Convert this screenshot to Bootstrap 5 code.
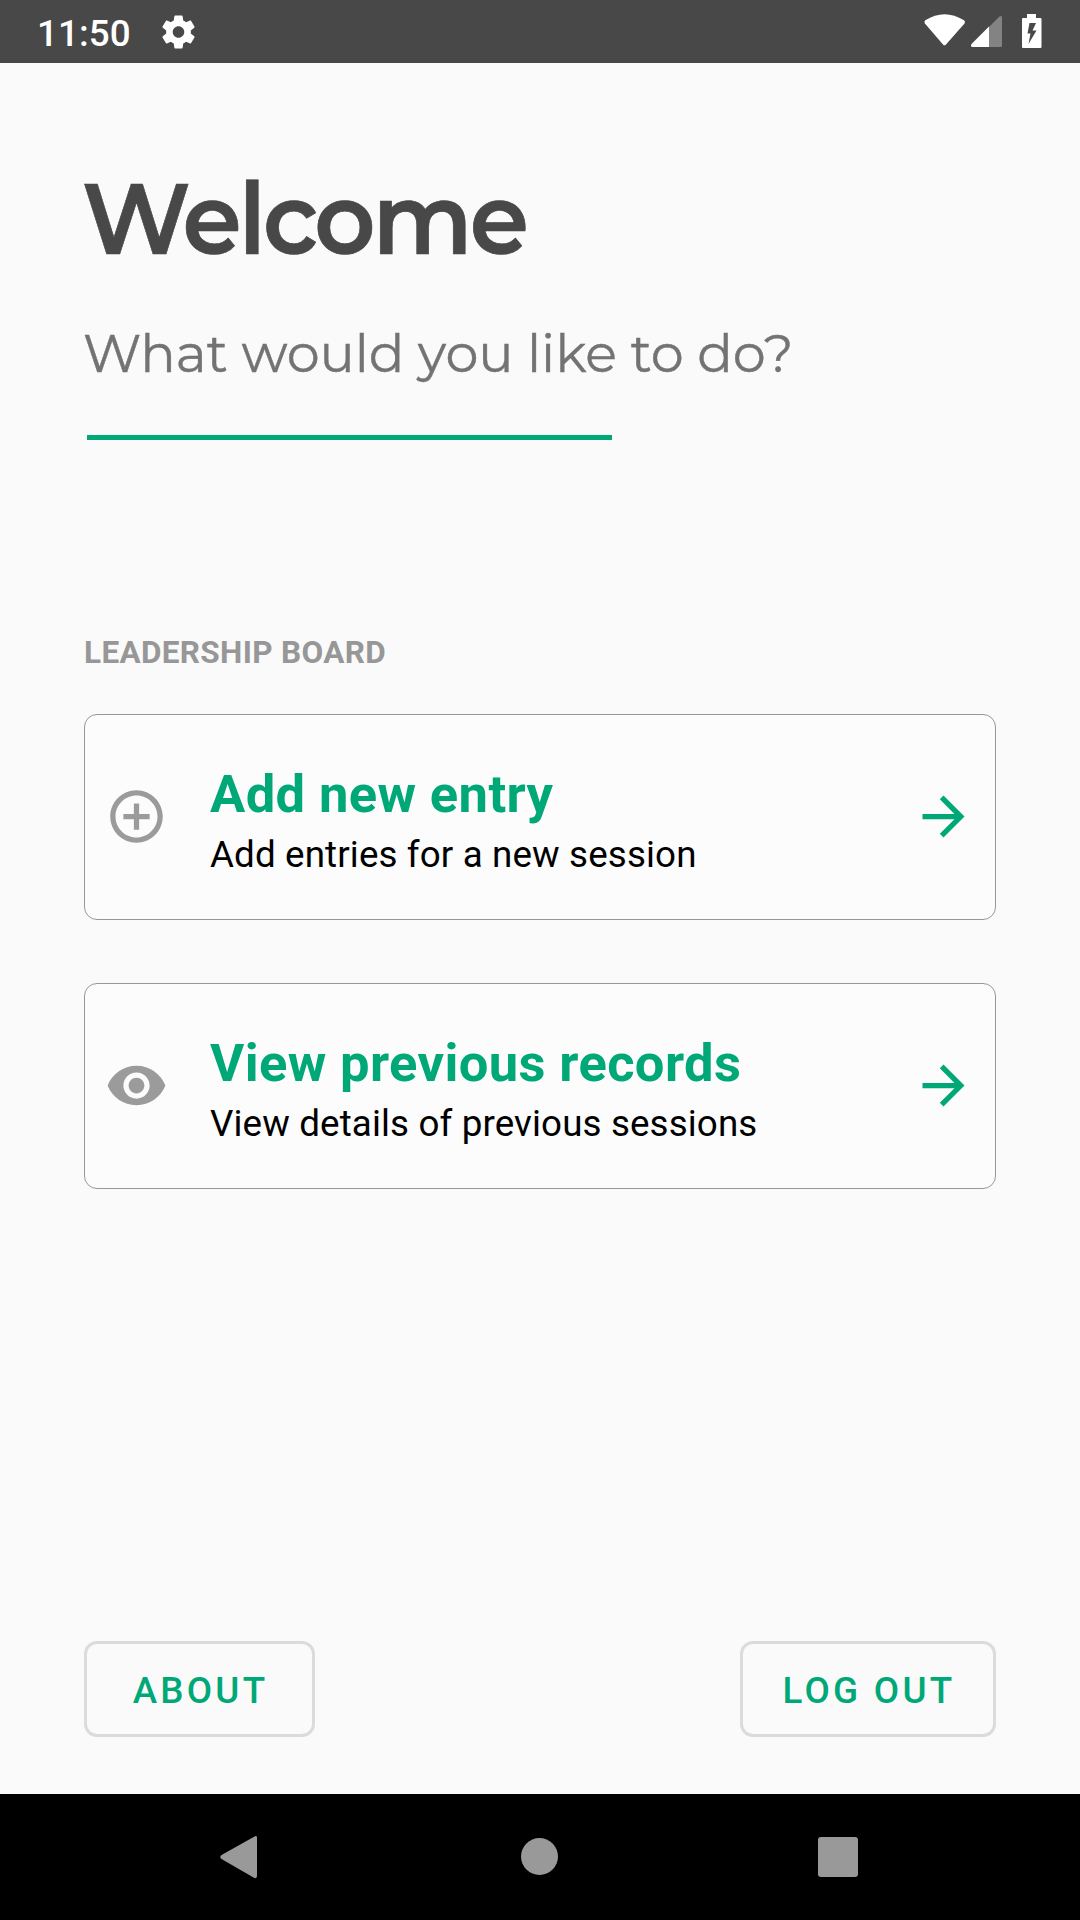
<!DOCTYPE html>
<html lang="en">
<head>
<meta charset="utf-8">
<meta name="viewport" content="width=device-width, initial-scale=1">
<title>Welcome</title>
<link href="https://cdn.jsdelivr.net/npm/bootstrap@5.3.0/dist/css/bootstrap.min.css" rel="stylesheet">
<style>
body{width:1080px;height:1920px;background:#fafafa;font-family:Roboto,sans-serif;overflow:hidden}
svg{display:block;flex:none}
.status-bar{height:63px;background:#484848;padding:0 37px 0 37px}
.clock{font-size:36.75px;font-weight:500;line-height:63px;padding-top:3px;width:125px;letter-spacing:.1px}
.screen{padding:0 84px 57px}
.headline{font-family:Montserrat,Inter,sans-serif;font-size:100px;font-weight:600;line-height:120px;color:#484848;margin:95px 0 0 -2px;letter-spacing:-3.2px;white-space:nowrap;transform:scaleX(.95);transform-origin:left;-webkit-text-stroke:.7px #484848}
.subline{font-family:Montserrat,Inter,sans-serif;font-size:52.5px;font-weight:400;line-height:64px;color:#737373;margin:43px 0 0 -1px;letter-spacing:-.1px;white-space:nowrap;-webkit-text-stroke:.4px #737373}
.rule-line{width:525px;height:5px;background:#00a878;margin:50px 0 0 3px}
.section-label{font-size:31.5px;font-weight:700;line-height:37px;color:#979797;margin:194px 0 0;letter-spacing:.34px}
.option{height:206px;border:1px solid #979797;border-radius:13px;background:#fcfcfc;padding:0 20px 2px 20px}
.option-title{font-size:52.5px;font-weight:700;line-height:62px;color:#00a878;letter-spacing:.38px}
.option-text{font-size:36.75px;line-height:43px;color:#000;margin-top:8px;letter-spacing:.13px}
.option-copy{margin-left:42px;padding-top:6px}
.outline-btn{height:96px;border:3px solid #dbdbdb;border-radius:13px;color:#00a878;font-size:36.75px;font-weight:500;letter-spacing:3.28px;line-height:1;padding:4px 0 0 2px}
.nav-keys{height:126px;background:#000}
</style>
</head>
<body class="d-flex flex-column">
<header class="status-bar d-flex align-items-center justify-content-between text-white">
  <div class="d-flex align-items-center">
    <div class="clock">11:50</div>
    <svg width="33" height="34" viewBox="2 2 20 20" fill="#fff"><path d="M19.43 12.98c.04-.32.07-.64.07-.98s-.03-.66-.07-.98l2.11-1.65c.19-.15.24-.42.12-.64l-2-3.46c-.12-.22-.39-.3-.61-.22l-2.49 1c-.52-.4-1.08-.73-1.69-.98l-.38-2.65C14.46 2.18 14.25 2 14 2h-4c-.25 0-.46.18-.49.42l-.38 2.65c-.61.25-1.17.59-1.69.98l-2.49-1c-.23-.09-.49 0-.61.22l-2 3.46c-.13.22-.07.49.12.64l2.11 1.65c-.04.32-.07.65-.07.98s.03.66.07.98l-2.11 1.65c-.19.15-.24.42-.12.64l2 3.46c.12.22.39.3.61.22l2.49-1c.52.4 1.08.73 1.69.98l.38 2.65c.03.24.24.42.49.42h4c.25 0 .46-.18.49-.42l.38-2.65c.61-.25 1.17-.59 1.69-.98l2.49 1c.23.09.49 0 .61-.22l2-3.46c.12-.22.07-.49-.12-.64l-2.11-1.65zM12 15.5c-1.93 0-3.5-1.57-3.5-3.5s1.57-3.5 3.5-3.5 3.5 1.57 3.5 3.5-1.57 3.5-3.5 3.5z"/></svg>
  </div>
  <svg width="121" height="63" viewBox="922 0 121 63" fill="#fff">
    <path d="M925.300 20.300Q944.500 8 964 20.300Q965.800 21.500 964.500 23.500L946 44.500Q944.500 46.200 943 44.500L924.900 23.500Q923.600 21.500 925.300 20.300z"/>
    <path d="M989 27L999.500 16.500Q1002 15 1002 17.500V45.500Q1002 47 1000.500 47H989z" fill="#838383"/>
    <path d="M989 26.500V47H972.500Q970 46.500 971.500 44z"/>
    <path fill-rule="evenodd" d="M1027 14h9v4h4.500q1 0 1 1v28q0 1-1 1h-17.500q-1 0-1-1v-28q0-1 1-1h4zM1029.500 23L1027.500 33.500H1030.500L1028.500 44L1036.500 30.500H1032.500L1036 23z"/>
  </svg>
</header>
<main class="screen flex-grow-1 d-flex flex-column">
  <h1 class="headline">Welcome</h1>
  <p class="subline">What would you like to do?</p>
  <div class="rule-line"></div>
  <h2 class="section-label">LEADERSHIP BOARD</h2>
  <section class="d-flex flex-column" style="gap:63px;margin-top:43px">
    <a class="option d-flex align-items-center text-decoration-none" href="#">
      <svg width="63" height="63" viewBox="0 0 24 24" fill="#9b9b9b"><path d="M13 7h-2v4H7v2h4v4h2v-4h4v-2h-4V7zm-1-5C6.480 2 2 6.480 2 12s4.480 10 10 10 10-4.480 10-10S17.520 2 12 2zm0 18c-4.410 0-8-3.590-8-8s3.590-8 8-8 8 3.590 8 8-3.590 8-8 8z"/></svg>
      <div class="option-copy flex-grow-1"><div class="option-title">Add new entry</div><div class="option-text">Add entries for a new session</div></div>
      <svg width="63" height="63" viewBox="0 0 24 24" fill="#00a878"><path d="M12 4l-1.410 1.410L16.170 11H4v2h12.170l-5.580 5.590L12 20l8-8z"/></svg>
    </a>
    <a class="option d-flex align-items-center text-decoration-none" href="#">
      <svg width="63" height="63" viewBox="0 0 24 24" fill="#9b9b9b"><path d="M12 4.500C7 4.500 2.730 7.610 1 12c1.730 4.390 6 7.500 11 7.500s9.270-3.110 11-7.500c-1.730-4.390-6-7.500-11-7.500zM12 17c-2.760 0-5-2.240-5-5s2.240-5 5-5 5 2.240 5 5-2.240 5-5 5zm0-8c-1.660 0-3 1.340-3 3s1.340 3 3 3 3-1.340 3-3-1.340-3-3-3z"/></svg>
      <div class="option-copy flex-grow-1"><div class="option-title">View previous records</div><div class="option-text">View details of previous sessions</div></div>
      <svg width="63" height="63" viewBox="0 0 24 24" fill="#00a878"><path d="M12 4l-1.410 1.410L16.170 11H4v2h12.170l-5.580 5.590L12 20l8-8z"/></svg>
    </a>
  </section>
  <div class="d-flex justify-content-between mt-auto">
    <button class="btn outline-btn" type="button" style="width:231px">ABOUT</button>
    <button class="btn outline-btn" type="button" style="width:256px">LOG OUT</button>
  </div>
</main>
<nav class="nav-keys">
  <svg width="1080" height="126" fill="#999"><path d="M255 42.300L221.500 61Q219 63 221.500 65L253.500 83.500Q257 85.300 257 82V43.500Q257 41.300 255 42.300z"/><circle cx="539.500" cy="62.500" r="18.500"/><rect x="818" y="43" width="40" height="40" rx="3"/></svg>
</nav>
<script src="https://cdn.jsdelivr.net/npm/bootstrap@5.3.0/dist/js/bootstrap.bundle.min.js"></script>
</body>
</html>
